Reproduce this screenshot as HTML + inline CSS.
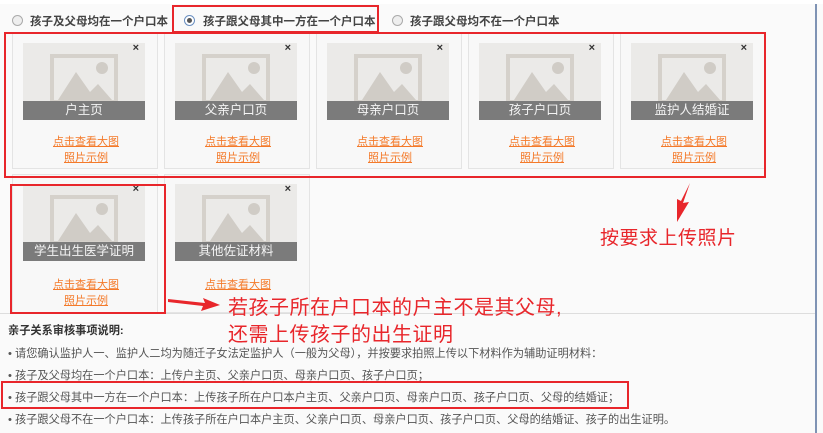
<!DOCTYPE html>
<html><head><meta charset="utf-8"><style>
*{margin:0;padding:0;box-sizing:border-box}
body{width:823px;height:433px;background:#fafafa;font-family:"Liberation Sans","Noto Sans CJK SC",sans-serif;position:relative;overflow:hidden}
.abs{position:absolute}
.card{position:absolute;width:146px;background:#f8f8f8;border:1px solid #e4e4e4}
.img{position:absolute;left:10px;top:9px;width:122px;height:77px;background:#ebeae8;overflow:hidden}
.img svg{position:absolute;left:27px;top:11px}
.bar{position:absolute;left:0;bottom:0;width:122px;height:19px;background:#7b7b7b;color:#f4f4f4;font-size:12.5px;text-align:center;line-height:19px}
.x{position:absolute;right:18px;top:8px;font-size:11px;color:#333;font-weight:bold}
.lk{position:absolute;left:0;width:146px;text-align:center;font-size:11px;color:#f47a2a;text-decoration:underline}
.red{position:absolute;border:2px solid #e8262b}
.rt{position:absolute;color:#e8262b;font-size:20px;white-space:nowrap;letter-spacing:0.5px}
.radio{position:absolute;width:11px;height:11px;border:1px solid #aaa;border-radius:50%;background:#eee}
.lbl{position:absolute;font-size:11.5px;font-weight:bold;color:#444;white-space:nowrap}
.note{position:absolute;left:8px;font-size:11.2px;color:#555;white-space:nowrap}
</style></head><body>
<div class="abs" style="left:0;top:0;width:823px;height:4px;background:#fff"></div>
<div class="abs" style="left:815px;top:4px;width:2px;height:429px;background:#7f93b4"></div>
<div class="abs" style="left:0;top:313px;width:815px;height:1px;background:#ddd"></div>

<div class="radio" style="left:12px;top:15px"></div>
<div class="lbl" style="left:30px;top:13px">孩子及父母均在一个户口本</div>
<div class="radio" style="left:184px;top:15px;border-color:#6a8fc0;background:#fff"><div style="width:5px;height:5px;background:#555;border-radius:50%;margin:2px"></div></div>
<div class="lbl" style="left:203px;top:13px">孩子跟父母其中一方在一个户口本</div>
<div class="radio" style="left:392px;top:15px"></div>
<div class="lbl" style="left:410px;top:13px">孩子跟父母均不在一个户口本</div>

<div class="card" style="left:12px;top:33px;height:136px"><div class="img"><svg width="68" height="50"><rect x="2" y="2" width="64" height="46" fill="none" stroke="#d5d1cb" stroke-width="4"/><polygon points="8,46 26,18 40,38 48,30 62,46" fill="#d0ccc6"/><circle cx="52" cy="14" r="6" fill="#d0ccc6"/></svg><div class="bar">户主页</div></div><div class="x">×</div><div class="lk" style="top:99px">点击查看大图</div><div class="lk" style="top:115px">照片示例</div></div>
<div class="card" style="left:164px;top:33px;height:136px"><div class="img"><svg width="68" height="50"><rect x="2" y="2" width="64" height="46" fill="none" stroke="#d5d1cb" stroke-width="4"/><polygon points="8,46 26,18 40,38 48,30 62,46" fill="#d0ccc6"/><circle cx="52" cy="14" r="6" fill="#d0ccc6"/></svg><div class="bar">父亲户口页</div></div><div class="x">×</div><div class="lk" style="top:99px">点击查看大图</div><div class="lk" style="top:115px">照片示例</div></div>
<div class="card" style="left:316px;top:33px;height:136px"><div class="img"><svg width="68" height="50"><rect x="2" y="2" width="64" height="46" fill="none" stroke="#d5d1cb" stroke-width="4"/><polygon points="8,46 26,18 40,38 48,30 62,46" fill="#d0ccc6"/><circle cx="52" cy="14" r="6" fill="#d0ccc6"/></svg><div class="bar">母亲户口页</div></div><div class="x">×</div><div class="lk" style="top:99px">点击查看大图</div><div class="lk" style="top:115px">照片示例</div></div>
<div class="card" style="left:468px;top:33px;height:136px"><div class="img"><svg width="68" height="50"><rect x="2" y="2" width="64" height="46" fill="none" stroke="#d5d1cb" stroke-width="4"/><polygon points="8,46 26,18 40,38 48,30 62,46" fill="#d0ccc6"/><circle cx="52" cy="14" r="6" fill="#d0ccc6"/></svg><div class="bar">孩子户口页</div></div><div class="x">×</div><div class="lk" style="top:99px">点击查看大图</div><div class="lk" style="top:115px">照片示例</div></div>
<div class="card" style="left:620px;top:33px;height:136px"><div class="img"><svg width="68" height="50"><rect x="2" y="2" width="64" height="46" fill="none" stroke="#d5d1cb" stroke-width="4"/><polygon points="8,46 26,18 40,38 48,30 62,46" fill="#d0ccc6"/><circle cx="52" cy="14" r="6" fill="#d0ccc6"/></svg><div class="bar">监护人结婚证</div></div><div class="x">×</div><div class="lk" style="top:99px">点击查看大图</div><div class="lk" style="top:115px">照片示例</div></div>

<div class="card" style="left:12px;top:174px;height:139px"><div class="img"><svg width="68" height="50"><rect x="2" y="2" width="64" height="46" fill="none" stroke="#d5d1cb" stroke-width="4"/><polygon points="8,46 26,18 40,38 48,30 62,46" fill="#d0ccc6"/><circle cx="52" cy="14" r="6" fill="#d0ccc6"/></svg><div class="bar">学生出生医学证明</div></div><div class="x">×</div><div class="lk" style="top:101px">点击查看大图</div><div class="lk" style="top:117px">照片示例</div></div>
<div class="card" style="left:164px;top:174px;height:139px"><div class="img"><svg width="68" height="50"><rect x="2" y="2" width="64" height="46" fill="none" stroke="#d5d1cb" stroke-width="4"/><polygon points="8,46 26,18 40,38 48,30 62,46" fill="#d0ccc6"/><circle cx="52" cy="14" r="6" fill="#d0ccc6"/></svg><div class="bar">其他佐证材料</div></div><div class="x">×</div><div class="lk" style="top:101px">点击查看大图</div></div>

<div class="red" style="left:172px;top:5px;width:207px;height:28px"></div>
<div class="red" style="left:4px;top:32px;width:762px;height:146px"></div>
<div class="red" style="left:10px;top:184px;width:156px;height:130px"></div>
<div class="red" style="left:1px;top:381px;width:628px;height:28px"></div>

<svg class="abs" style="left:0;top:0" width="823" height="433">
<polygon points="168,299 205,303 203,298 220,305 201,311 203,306 168,302" fill="#e8262b"/>
<polygon points="690,183 683,203 689,202 677,222 677,199 681,201" fill="#e8262b"/>
</svg>
<div class="rt" style="left:600px;top:223px;font-size:19px">按要求上传照片</div>
<div class="rt" style="left:228px;top:291px">若孩子所在户口本的户主不是其父母,</div>
<div class="rt" style="left:228px;top:318px">还需上传孩子的出生证明</div>

<div class="note" style="top:322px;font-weight:bold;color:#333">亲子关系审核事项说明:</div>
<div class="note" style="top:345px">• 请您确认监护人一、监护人二均为随迁子女法定监护人（一般为父母），并按要求拍照上传以下材料作为辅助证明材料：</div>
<div class="note" style="top:367px">• 孩子及父母均在一个户口本：上传户主页、父亲户口页、母亲户口页、孩子户口页；</div>
<div class="note" style="top:389px">• 孩子跟父母其中一方在一个户口本：上传孩子所在户口本户主页、父亲户口页、母亲户口页、孩子户口页、父母的结婚证；</div>
<div class="note" style="top:411px">• 孩子跟父母不在一个户口本：上传孩子所在户口本户主页、父亲户口页、母亲户口页、孩子户口页、父母的结婚证、孩子的出生证明。</div>
</body></html>
